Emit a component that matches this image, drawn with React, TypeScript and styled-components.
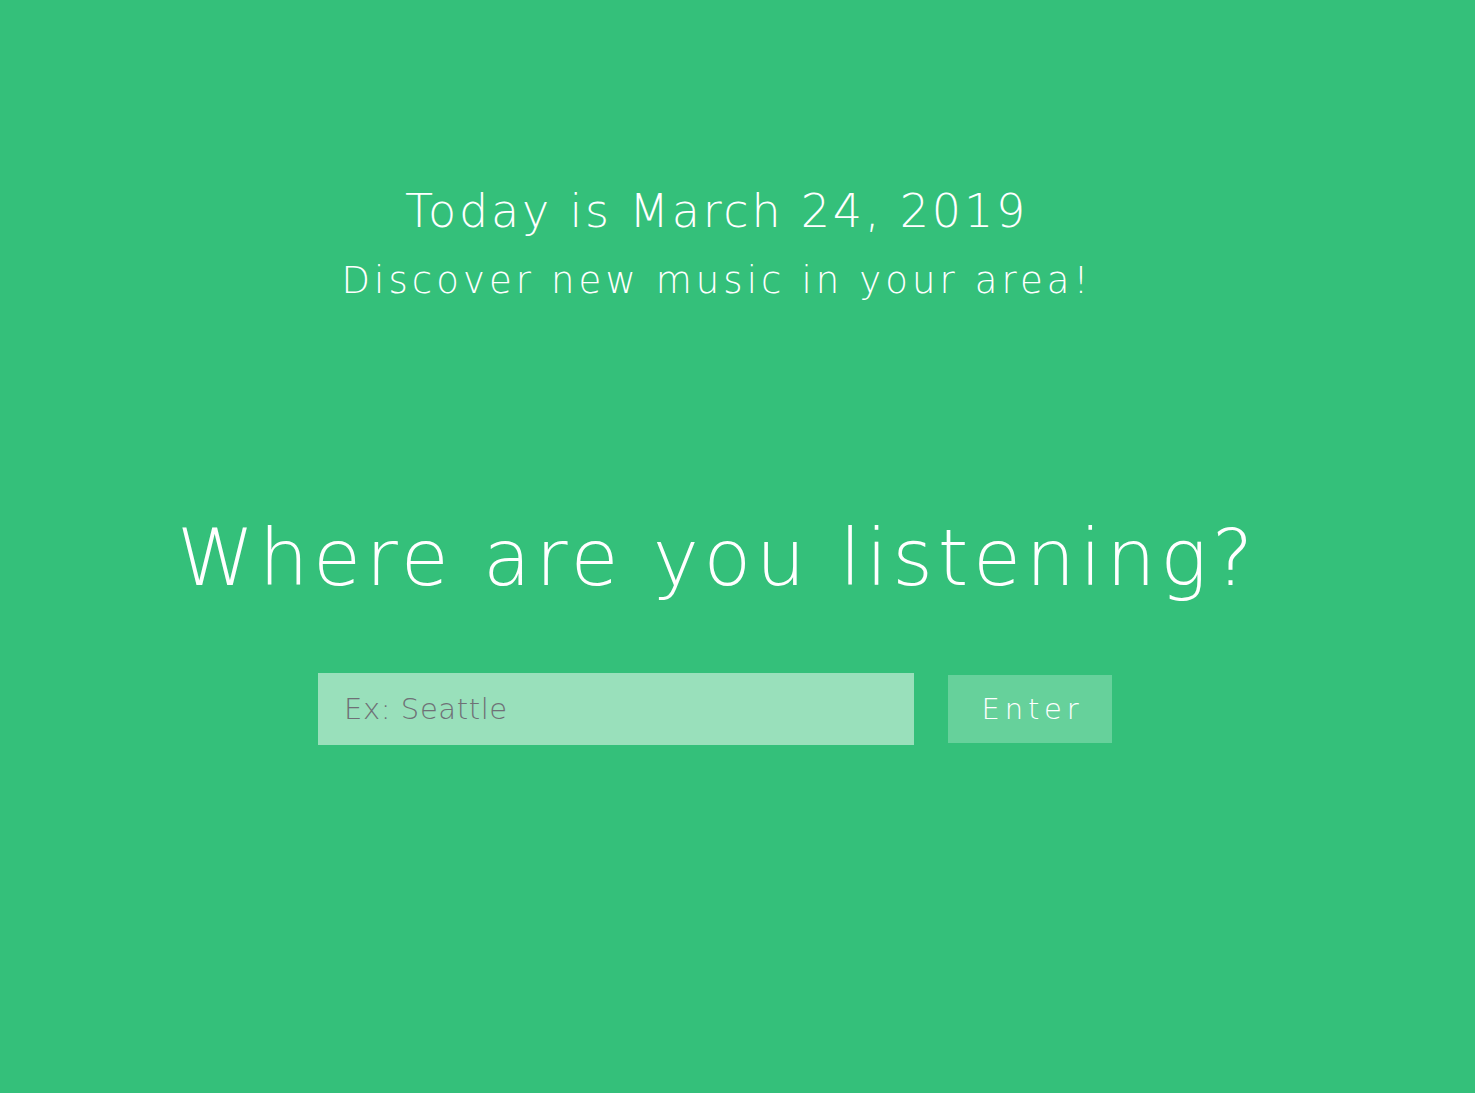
import React from "react";
import styled, { createGlobalStyle } from "styled-components";

const Global = createGlobalStyle`
  html, body { margin: 0; padding: 0; }
  body { background: #34c07a; font-family: "DejaVu Sans", "Lato", sans-serif; }
`;

const Page = styled.main`
  width: 1430px;
  min-height: 1093px;
  display: flex;
  flex-direction: column;
  align-items: center;
  color: #ffffff;
  font-weight: 200;
  text-align: center;
`;

const Header = styled.header`
  padding-top: 180px;
  display: flex;
  flex-direction: column;
  align-items: center;
`;

const DateLine = styled.h2`
  margin: 0;
  padding-left: 3px;
  font-size: 46px;
  font-weight: 200;
  letter-spacing: 2.8px;
  line-height: 62px;
`;

const Tagline = styled.p`
  margin: 14px 0 0;
  padding-left: 4px;
  font-size: 37px;
  font-weight: 200;
  letter-spacing: 4.1px;
  line-height: 50px;
`;

const Question = styled.h1`
  margin: 202px 0 0;
  padding-left: 5px;
  font-size: 78px;
  font-weight: 200;
  letter-spacing: 4.7px;
  line-height: 100px;
`;

const Form = styled.form`
  margin-top: 65px;
  display: flex;
  align-items: center;
  gap: 34px;
`;

const Input = styled.input`
  width: 596px;
  height: 72px;
  box-sizing: border-box;
  border: none;
  outline: none;
  background: #99e0bb;
  padding: 0 26px;
  font-family: inherit;
  font-size: 29px;
  font-weight: 200;
  letter-spacing: 0.6px;
  color: #555;
  &::placeholder { color: #6f7076; }
`;

const Button = styled.button`
  width: 164px;
  height: 68px;
  border: none;
  padding: 0 0 0 5px;
  background: #66d19b;
  color: #fff;
  font-family: inherit;
  font-size: 29px;
  font-weight: 200;
  letter-spacing: 4.8px;
  cursor: pointer;
`;

export default function App() {
  return (
    <>
      <Global />
      <Page>
        <Header>
          <DateLine>Today is March 24, 2019</DateLine>
          <Tagline>Discover new music in your area!</Tagline>
        </Header>
        <Question>Where are you listening?</Question>
        <Form onSubmit={(e) => e.preventDefault()}>
          <Input placeholder="Ex: Seattle" />
          <Button type="submit">Enter</Button>
        </Form>
      </Page>
    </>
  );
}
